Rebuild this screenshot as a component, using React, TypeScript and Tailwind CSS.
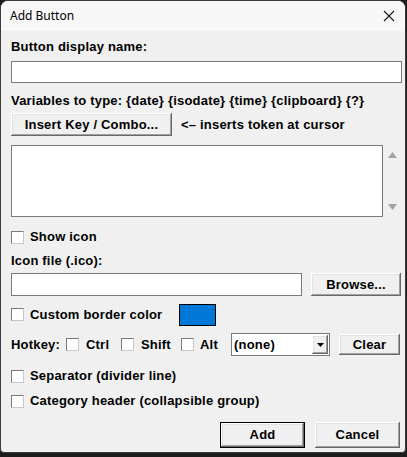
import React from 'react';

const raised =
  'bg-[#f0f0f0] shadow-[inset_-1px_-1px_0_#696969,inset_1px_1px_0_#ffffff,inset_-2px_-2px_0_#a0a0a0,inset_2px_2px_0_#e3e3e3]';

const Check = () => (
  <span className="inline-block w-[13px] h-[13px] shrink-0 bg-white border border-t-[#7a7a7a] border-l-[#7a7a7a] border-r-[#c8c8c8] border-b-[#c8c8c8]" />
);

const CheckRow = ({ label }: { label: string }) => (
  <div className="flex items-center h-[14px] gap-[6px]">
    <Check />
    <span>{label}</span>
  </div>
);

const Btn = ({ label, className = '' }: { label: string; className?: string }) => (
  <div className={`flex items-center justify-center ${raised} ${className}`}>{label}</div>
);

export default function App() {
  return (
    <div className="w-[407px] h-[457px] bg-[#1c1c1c] overflow-hidden">
      <div className="w-[406px] h-[453px] flex flex-col bg-[#f0f0f0] border border-[#3a3a3a] rounded-t-[8px] rounded-b-[4px] overflow-hidden font-['Liberation_Sans',Arial,sans-serif] text-[13px] tracking-[0.2px] font-bold text-black leading-[14px]">
        {/* title bar */}
        <div className="h-[30px] shrink-0 bg-[#f7f7f7] flex items-center justify-between pl-[9px] pr-[8px] font-['Noto_Sans',sans-serif] font-normal text-[12px] tracking-normal">
          <span>Add Button</span>
          <svg width="12" height="12" viewBox="0 0 12 12" className="mr-[2px]">
            <path d="M1 1L11 11M11 1L1 11" stroke="#1a1a1a" strokeWidth="1.1" />
          </svg>
        </div>

        <div className="flex flex-col pl-[10px] pr-[4px]">
          <div className="mt-[9px] h-[14px]">Button display name:</div>
          <div className="mt-[7px] w-[391px] h-[22px] bg-white border border-[#7a7a7a]" />

          <div className="mt-[11px] h-[14px] whitespace-nowrap">Variables to type: {'{date}'} {'{isodate}'} {'{time}'} {'{clipboard}'} {'{?}'}</div>
          <div className="mt-[5px] h-[23px] flex items-center">
            <Btn label="Insert Key / Combo..." className="w-[161px] h-[23px]" />
            <span className="ml-[9px]">&lt;– inserts token at cursor</span>
          </div>

          <div className="mt-[9px] flex">
            <div className="w-[374px] h-[72px] bg-white border border-[#7a7a7a]" />
            <div className="w-[17px] flex flex-col items-center justify-between py-[7px] ml-[1px]">
              <svg width="9" height="6" viewBox="0 0 9 6"><path d="M4.5 0L9 6H0Z" fill="#a3a3a3" /></svg>
              <svg width="9" height="6" viewBox="0 0 9 6"><path d="M0 0H9L4.5 6Z" fill="#a3a3a3" /></svg>
            </div>
          </div>

          <div className="mt-[13px]"><CheckRow label="Show icon" /></div>

          <div className="mt-[10px] h-[14px]">Icon file (.ico):</div>
          <div className="mt-[5px] h-[23px] flex items-center">
            <div className="w-[291px] h-[23px] bg-white border border-[#7a7a7a]" />
            <Btn label="Browse..." className="ml-[9px] w-[90px] h-[23px]" />
          </div>

          <div className="mt-[7px] h-[23px] flex items-center">
            <div className="w-[168px]"><CheckRow label="Custom border color" /></div>
            <div className="w-[37px] h-[22px] bg-[#0078d7] border border-black" />
          </div>

          <div className="mt-[7px] h-[23px] flex items-center">
            <span className="w-[55px]">Hotkey:</span>
            <Check />
            <span className="ml-[7px] w-[35px]">Ctrl</span>
            <Check />
            <span className="ml-[7px] w-[40px]">Shift</span>
            <Check />
            <span className="ml-[6px] w-[31px]">Alt</span>
            <div className="w-[99px] h-[23px] bg-white border border-[#7a7a7a] flex items-center justify-between pl-[2px] pr-[1px]">
              <span>(none)</span>
              <div className={`w-[16px] h-[19px] flex items-center justify-center ${raised}`}>
                <svg width="7" height="4" viewBox="0 0 7 4"><path d="M0 0H7L3.5 4Z" fill="#000" /></svg>
              </div>
            </div>
            <Btn label="Clear" className="ml-[9px] w-[61px] h-[21px]" />
          </div>

          <div className="mt-[13px]"><CheckRow label="Separator (divider line)" /></div>
          <div className="mt-[11px]"><CheckRow label="Category header (collapsible group)" /></div>

          <div className="mt-[14px] flex justify-end pr-[1px] gap-[10px]">
            <div className="w-[85px] h-[26px] border border-black flex">
              <Btn label="Add" className="flex-1" />
            </div>
            <Btn label="Cancel" className="w-[85px] h-[26px]" />
          </div>
        </div>
      </div>
    </div>
  );
}
